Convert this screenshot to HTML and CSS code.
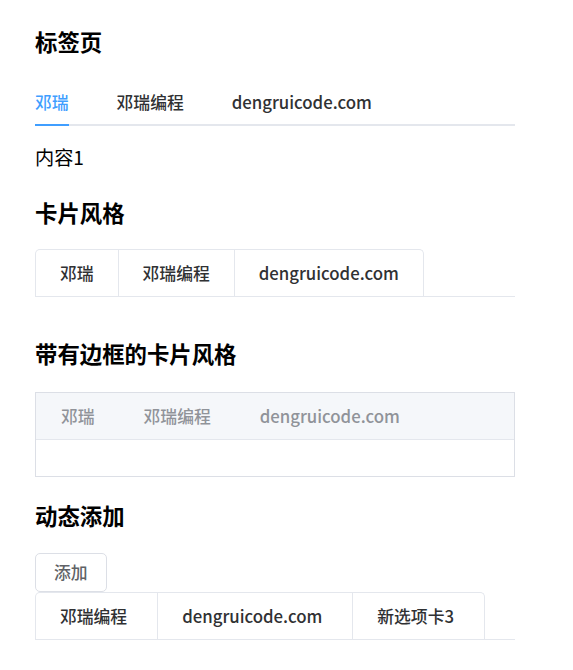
FILE: index.html
```html
<!DOCTYPE html>
<html lang="zh-CN">
<head>
<meta charset="utf-8">
<title>标签页</title>
<link rel="stylesheet" href="styles.css">
</head>
<body>
<div class="page">
  <h3 class="title title-first">标签页</h3>
  <div class="line-tabs">
    <div class="line-header">
      <div class="line-tab active"><span class="label">邓瑞</span></div>
      <div class="line-tab"><span class="label">邓瑞编程</span></div>
      <div class="line-tab"><span class="label">dengruicode.com</span></div>
    </div>
    <div class="pane">内容1</div>
  </div>

  <h3 class="title">卡片风格</h3>
  <div class="card-tabs">
    <div class="card-header">
      <div class="card-nav">
        <div class="card-tab">邓瑞</div>
        <div class="card-tab">邓瑞编程</div>
        <div class="card-tab">dengruicode.com</div>
      </div>
    </div>
  </div>

  <h3 class="title title-tight">带有边框的卡片风格</h3>
  <div class="bcard">
    <div class="bcard-header">
      <div class="bcard-tab">邓瑞</div>
      <div class="bcard-tab">邓瑞编程</div>
      <div class="bcard-tab">dengruicode.com</div>
    </div>
    <div class="bcard-content"></div>
  </div>

  <h3 class="title title-btn">动态添加</h3>
  <button class="btn" type="button">添加</button>
  <div class="card-tabs dynamic">
    <div class="card-header">
      <div class="card-nav">
        <div class="card-tab">邓瑞编程<span class="close"></span></div>
        <div class="card-tab">dengruicode.com<span class="close"></span></div>
        <div class="card-tab">新选项卡3<span class="close"></span></div>
      </div>
    </div>
  </div>
</div>
</body>
</html>
```

FILE: styles.css
```css
* { box-sizing: border-box; }
html, body { margin: 0; padding: 0; background: #fff; }
body {
  font-family: "Noto Sans CJK SC", "Noto Sans", sans-serif;
  color: #000;
}
.page {
  padding: 25px 0 0 35px;
  width: 515px;
}
.title {
  margin: 0 0 21px;
  font-size: 22.4px;
  line-height: 32px;
  font-weight: 700;
  color: #000;
}
.title-tight { margin-bottom: 23px; }
.title-btn { margin-bottom: 22.5px; }

/* line tabs */
.line-header {
  position: relative;
  display: flex;
  height: 48px;
}
.line-header::after {
  content: "";
  position: absolute;
  left: 0; right: 0; bottom: 0;
  height: 2px;
  background: #e4e7ed;
}
.line-tab {
  padding: 0 24px;
  height: 48px;
  font-size: 16.8px;
  font-weight: 500;
  color: #303133;
}
.line-tab:first-child { padding-left: 0; }
.line-tab:last-child { padding-right: 0; }
.line-tab .label {
  position: relative;
  display: block;
  height: 48px;
  line-height: 49px;
  white-space: nowrap;
}
.line-tab.active { color: #409eff; }
.line-tab.active .label::after {
  content: "";
  position: absolute;
  left: 0; right: 0; bottom: 0;
  height: 2px;
  background: #409eff;
  z-index: 1;
}
.pane {
  margin-top: 18px;
  font-size: 19.2px;
  line-height: 26px;
  color: #000;
  margin-bottom: 25.5px;
}

/* card tabs */
.card-tabs { margin-bottom: 40.5px; }
.card-header {
  display: flex;
  height: 48px;
  border-bottom: 1px solid #e4e7ed;
}
.card-nav {
  display: flex;
  height: 47px;
  border: 1px solid #e4e7ed;
  border-bottom: none;
  border-radius: 5px 5px 0 0;
}
.card-tab {
  padding: 0 24px;
  line-height: 46px;
  font-size: 16.8px;
  font-weight: 500;
  color: #303133;
  white-space: nowrap;
  border-left: 1px solid #e4e7ed;
}
.card-tab:first-child { border-left: none; }
.card-tab .close {
  display: inline-block;
  width: 0;
  margin-left: 6px;
}

/* border card */
.bcard {
  border: 1px solid #dcdfe6;
  background: #fff;
  margin-bottom: 21.7px;
}
.bcard-header {
  display: flex;
  height: 47px;
  background: #f5f7fa;
  border-bottom: 1px solid #e4e7ed;
}
.bcard-tab {
  padding: 0 25px;
  line-height: 46px;
  font-size: 16.8px;
  font-weight: 500;
  color: #909399;
  white-space: nowrap;
}
.bcard-tab + .bcard-tab { margin-left: -1px; }
.bcard-content { height: 36px; }

/* button */
.btn {
  display: block;
  height: 38.4px;
  padding: 0 18px;
  border: 1px solid #dcdfe6;
  border-radius: 5px;
  background: #fff;
  color: #606266;
  font-family: "Noto Sans CJK SC", "Noto Sans", sans-serif;
  font-size: 16.8px;
  font-weight: 500;
  line-height: 36px;
}
.dynamic { margin-bottom: 0; }
```
